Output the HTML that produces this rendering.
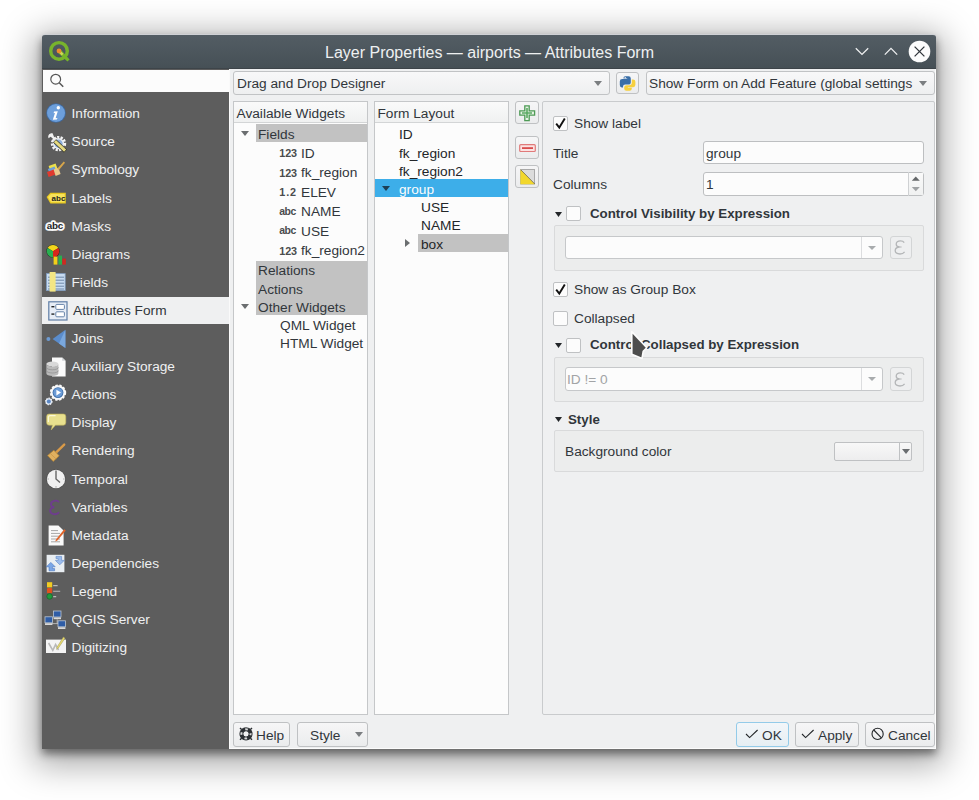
<!DOCTYPE html>
<html><head><meta charset="utf-8">
<style>
*{box-sizing:border-box;margin:0;padding:0}
html,body{width:979px;height:800px;overflow:hidden;background:#fff;font-family:"Liberation Sans",sans-serif;font-size:13.7px;color:#232629}
.a{position:absolute}
.t{position:absolute;white-space:nowrap;line-height:16px}
svg{position:absolute;overflow:visible}
</style></head><body>
<div class="a" style="left:42px;top:34px;width:894px;height:715px;background:#fcfcfc;box-shadow:0 5px 8px rgba(0,0,0,0.45), 0 8px 34px 8px rgba(0,0,0,0.34);border-radius:4px 4px 0 0"></div>
<div class="a" style="left:230px;top:69px;width:705px;height:679px;background:#eff0f1"></div>
<div class="a" style="left:42px;top:34px;width:894px;height:35px;background:linear-gradient(#535d64,#465056);border-radius:3px 3px 0 0;border-top:1px solid #cfd1d5;border-bottom:1px solid #3d4449"></div>
<div class="t" style="left:325px;top:44.61px;font-size:16px;color:#eef0f1;font-weight:normal;">Layer Properties — airports — Attributes Form</div>
<div class="a" style="left:42px;top:69px;width:187px;height:680px;background:#5d5d5d"></div>
<div class="a" style="left:43px;top:70px;width:186px;height:22px;background:#fcfcfc"></div>
<div class="a" style="left:229px;top:69px;width:1px;height:680px;background:#fafafa"></div>
<div class="t" style="left:71.5px;top:106.17px;font-size:13.7px;color:#eff0f1;font-weight:normal;">Information</div>
<div class="t" style="left:71.5px;top:134.28px;font-size:13.7px;color:#eff0f1;font-weight:normal;">Source</div>
<div class="t" style="left:71.5px;top:162.39px;font-size:13.7px;color:#eff0f1;font-weight:normal;">Symbology</div>
<div class="t" style="left:71.5px;top:190.50px;font-size:13.7px;color:#eff0f1;font-weight:normal;">Labels</div>
<div class="t" style="left:71.5px;top:218.61px;font-size:13.7px;color:#eff0f1;font-weight:normal;">Masks</div>
<div class="t" style="left:71.5px;top:246.72px;font-size:13.7px;color:#eff0f1;font-weight:normal;">Diagrams</div>
<div class="t" style="left:71.5px;top:274.83px;font-size:13.7px;color:#eff0f1;font-weight:normal;">Fields</div>
<div class="a" style="left:42px;top:297px;width:187px;height:27px;background:#eff0f1"></div>
<div class="t" style="left:73px;top:302.94px;font-size:13.7px;color:#31363b;font-weight:normal;">Attributes Form</div>
<div class="t" style="left:71.5px;top:331.05px;font-size:13.7px;color:#eff0f1;font-weight:normal;">Joins</div>
<div class="t" style="left:71.5px;top:359.16px;font-size:13.7px;color:#eff0f1;font-weight:normal;">Auxiliary Storage</div>
<div class="t" style="left:71.5px;top:387.27px;font-size:13.7px;color:#eff0f1;font-weight:normal;">Actions</div>
<div class="t" style="left:71.5px;top:415.38px;font-size:13.7px;color:#eff0f1;font-weight:normal;">Display</div>
<div class="t" style="left:71.5px;top:443.49px;font-size:13.7px;color:#eff0f1;font-weight:normal;">Rendering</div>
<div class="t" style="left:71.5px;top:471.60px;font-size:13.7px;color:#eff0f1;font-weight:normal;">Temporal</div>
<div class="t" style="left:71.5px;top:499.71px;font-size:13.7px;color:#eff0f1;font-weight:normal;">Variables</div>
<div class="t" style="left:71.5px;top:527.82px;font-size:13.7px;color:#eff0f1;font-weight:normal;">Metadata</div>
<div class="t" style="left:71.5px;top:555.93px;font-size:13.7px;color:#eff0f1;font-weight:normal;">Dependencies</div>
<div class="t" style="left:71.5px;top:584.04px;font-size:13.7px;color:#eff0f1;font-weight:normal;">Legend</div>
<div class="t" style="left:71.5px;top:612.15px;font-size:13.7px;color:#eff0f1;font-weight:normal;">QGIS Server</div>
<div class="t" style="left:71.5px;top:640.26px;font-size:13.7px;color:#eff0f1;font-weight:normal;">Digitizing</div>
<svg style="left:46px;top:103.4px" width="21" height="21" viewBox="0 0 21 21"><circle cx="10" cy="10" r="9.8" fill="#3f6a9f"/><circle cx="10" cy="10" r="9" fill="#6d9fdb"/><circle cx="12.3" cy="4.8" r="1.7" fill="#fff"/><path d="M8 8.6L11.8 8.2L9.6 15.2L11.5 15L10.8 16.6L6.8 16.8L9 10L7.6 10.2Z" fill="#fff"/></svg>
<svg style="left:46px;top:131.6px" width="21" height="21" viewBox="0 0 21 21"><circle cx="12.5" cy="11.6" r="6.4" fill="none" stroke="#f4f4f4" stroke-width="2.6" stroke-dasharray="2.2 1.3"/><circle cx="12.5" cy="11.6" r="5.6" fill="#f0f2f5"/><circle cx="12.5" cy="11.6" r="4.2" fill="#8fb0dc"/><path d="M6.6 1.2C3.6 0.8 1.4 3.2 2.6 6.2L4.6 4.8L6.8 6.4L6.2 8.6C8.2 9.4 10.4 7.6 9.8 5.2L11.2 6.6L9.4 8.4Z" fill="#f2f2f2"/><path d="M8.6 8.8L19.4 19" stroke="#2e2e22" stroke-width="4.4"/><path d="M8.9 9.1L19.1 18.7" stroke="#e6da80" stroke-width="3"/></svg>
<svg style="left:46px;top:159.7px" width="21" height="21" viewBox="0 0 21 21"><path d="M2.6 6L9.6 3.4L12 10L5 12.6Z" fill="#ece04a"/><path d="M1.9 9L8.6 6.6L9.6 9.4L2.9 11.8Z" fill="#6fa0d6"/><path d="M1 12L7.8 9.6L9.6 14.6L2.6 17Z" fill="#e03a2e"/><path d="M7.6 9.6L12.4 7.8L14.6 14L9.6 16Z" fill="#e9c88b"/><path d="M11.4 8.6L17.8 1.6L19 2.8L13 10Z" fill="#d8a64a"/></svg>
<svg style="left:46px;top:190.6px" width="21" height="21" viewBox="0 0 21 21"><path d="M0.6 6L4.4 1.8H19.8V12.4H4.4Z" fill="#e8c81e"/><path d="M2 6L5 3H18.6V11.2H5Z" fill="#f6e25a"/><text x="5.6" y="10.4" font-family="Liberation Sans" font-weight="bold" font-size="8" fill="#1e1e1e">abc</text></svg>
<svg style="left:45.2px;top:219.2px" width="21" height="21" viewBox="0 0 21 21"><text x="1.8" y="9.8" font-family="Liberation Sans" font-weight="bold" font-size="9.8" fill="#232629" stroke="#fafafa" stroke-width="3.6" stroke-linejoin="round" paint-order="stroke" letter-spacing="-0.3">abc</text></svg>
<svg style="left:46px;top:243.8px" width="21" height="21" viewBox="0 0 21 21"><circle cx="7" cy="7.2" r="6.6" fill="#1f2a1a"/><path d="M7 7.2L1.6 4.1A6.2 6.2 0 0 1 12.4 4.1Z" fill="#f4d61c"/><path d="M7 7.2L12.4 4.1A6.2 6.2 0 0 1 7 13.4Z" fill="#d8261c"/><path d="M7 7.2L7 13.4A6.2 6.2 0 0 1 1.6 4.1Z" fill="#29b050"/><rect x="7.6" y="12.6" width="3.8" height="8" fill="#f2cf18"/><rect x="12.4" y="11.6" width="3.6" height="9" fill="#2aae4e"/><rect x="16.3" y="14.6" width="3.6" height="6" fill="#d02a20"/></svg>
<svg style="left:46px;top:271px" width="21" height="21" viewBox="0 0 21 21"><rect x="0.4" y="2.6" width="18.8" height="17" fill="#c8dcf2" stroke="#7f9bbd" stroke-width="0.8"/><path d="M2 6.2H18M2 9.2H18M2 12.2H18M2 15.2H18M2 18H18" stroke="#6e88a8" stroke-width="1"/><rect x="3.6" y="1" width="6" height="19.6" fill="#f3e684"/></svg>
<svg style="left:48.3px;top:300.8px" width="21" height="21" viewBox="0 0 21 21"><rect x="0.8" y="0.8" width="18.2" height="18.2" fill="#e7edf6" stroke="#5f7ea6" stroke-width="1.2"/><rect x="3.4" y="5" width="3" height="1.4" fill="#232629"/><rect x="3.4" y="12.4" width="3" height="1.4" fill="#232629"/><rect x="7.8" y="3.4" width="8.6" height="5" rx="1" fill="#fff" stroke="#6582a8" stroke-width="1"/><rect x="7.8" y="10.8" width="8.6" height="5" rx="1" fill="#fff" stroke="#6582a8" stroke-width="1"/></svg>
<svg style="left:46.4px;top:329.4px" width="21" height="21" viewBox="0 0 21 21"><circle cx="2.4" cy="10" r="2" fill="#6d9ad0"/><path d="M19.4 0.8V19L6.6 10Z" fill="#5a8ccc"/><path d="M19.4 0.8V19L13 14.6Z" fill="#7aa8de"/></svg>
<svg style="left:46px;top:356.6px" width="21" height="21" viewBox="0 0 21 21"><path d="M6 0.4H16.2L19.6 3.8V19.4H6Z" fill="#fafafa"/><path d="M16.2 0.4V3.8H19.6Z" fill="#cfd2d4"/><ellipse cx="6.4" cy="7" rx="6" ry="2.4" fill="#d9d9d9"/><path d="M0.4 7V16.6A6 2.4 0 0 0 12.4 16.6V7A6 2.4 0 0 1 0.4 7Z" fill="#b9b9b9"/><path d="M0.4 10.4A6 2.4 0 0 0 12.4 10.4M0.4 13.6A6 2.4 0 0 0 12.4 13.6" stroke="#8e8e8e" stroke-width="0.7" fill="none"/></svg>
<svg style="left:46px;top:384.6px" width="21" height="21" viewBox="0 0 21 21"><circle cx="12" cy="7.6" r="7.4" fill="#fafafa" stroke="#fafafa" stroke-width="1.6" stroke-dasharray="2.4 1.6"/><circle cx="12" cy="7.6" r="5.4" fill="#3e6ea8"/><circle cx="12" cy="7.6" r="4.6" fill="#6b9bd6"/><path d="M10.4 4.8V10.4L15 7.6Z" fill="#fff"/><circle cx="2.8" cy="16.4" r="3.2" fill="#dfe8f4" stroke="#eef2f8" stroke-width="1.2" stroke-dasharray="1.4 1"/><circle cx="2.8" cy="16.4" r="2" fill="#5b87c4"/></svg>
<svg style="left:46px;top:413px" width="21" height="21" viewBox="0 0 21 21"><path d="M3 1H17.4A2.4 2.4 0 0 1 19.8 3.4V9.8A2.4 2.4 0 0 1 17.4 12.2H9.4L5.2 17L6.4 12.2H3A2.4 2.4 0 0 1 0.6 9.8V3.4A2.4 2.4 0 0 1 3 1Z" fill="#e8e08e" stroke="#bfb25a" stroke-width="0.6"/><path d="M2.4 9V4A1.8 1.8 0 0 1 4.2 2.6H9.6" stroke="#fbf8d6" stroke-width="1.2" fill="none"/></svg>
<svg style="left:46px;top:442px" width="21" height="21" viewBox="0 0 21 21"><path d="M10 10.6L18.2 2.6" stroke="#d99a48" stroke-width="2.4" stroke-linecap="round"/><path d="M1.6 13.6L7.8 8.2L13.2 13.8L7.2 19.4Z" fill="#e0b060" stroke="#b8842e" stroke-width="0.7"/><path d="M4.2 11.4L10.2 17" stroke="#c89440" stroke-width="0.7"/></svg>
<svg style="left:45.8px;top:469.2px" width="21" height="21" viewBox="0 0 21 21"><circle cx="10" cy="10" r="9.8" fill="#4a4a4a"/><circle cx="10" cy="10" r="9.2" fill="#f0f0f0"/><path d="M10 1.6V10L14 13.6" stroke="#666" stroke-width="1.4" fill="none"/><g fill="#888"><rect x="9.6" y="17.2" width="0.8" height="1.4"/><rect x="1.4" y="9.6" width="1.4" height="0.8"/><rect x="17.2" y="9.6" width="1.4" height="0.8"/></g></svg>
<svg style="left:46px;top:498.6px" width="21" height="21" viewBox="0 0 21 21"><path d="M12.4 2.6C10.6 0.8 5 1.6 5 5.2C5 7 6.6 8 8.2 8.2C5.8 8.4 3.8 9.8 4.2 12.2C4.8 15.8 10.4 16 12.4 13.8" stroke="#6e3d8e" stroke-width="1.9" fill="none" stroke-linecap="round"/></svg>
<svg style="left:46.4px;top:524.8px" width="21" height="21" viewBox="0 0 21 21"><path d="M2.6 0.6H12.4L17.6 5.4V20.4H2.6Z" fill="#fafafa"/><path d="M5 5.6H12M5 8.4H14M5 11.2H14M5 14H14M5 16.8H14" stroke="#a6a6a6" stroke-width="1"/><path d="M10 14.6L18.2 4.2L19.8 5.6L11.4 15.6L9.2 16.6Z" fill="#e0642a"/></svg>
<svg style="left:46.2px;top:553.6px" width="21" height="21" viewBox="0 0 21 21"><path d="M0.6 0.8H18.4V18.2H0.6Z" fill="#e9eef2"/><path d="M10 2.4H15.6V6.4H18.2L13.8 10.8L9.4 6.4H12.2V4.6H10Z" fill="#9bbcec" stroke="#5c86c8" stroke-width="0.6"/><path d="M8.6 16.8H3V12.8H0.4L4.8 8.4L9.2 12.8H6.4V14.6H8.6Z" fill="#7aa6e6" stroke="#4a76be" stroke-width="0.6"/></svg>
<svg style="left:46px;top:581.4px" width="21" height="21" viewBox="0 0 21 21"><rect x="1" y="1.2" width="5.2" height="5.2" fill="#f2cc22"/><rect x="1" y="7" width="5.2" height="5.2" fill="#e2521e" rx="1"/><circle cx="3.6" cy="15.4" r="2.8" fill="#1f9a3c" stroke="#135a24" stroke-width="0.6"/><path d="M7.2 4.6H11.6M7.2 10.2H14.2M7.2 15.6H10.2" stroke="#b8b8b8" stroke-width="1.1"/></svg>
<svg style="left:45.4px;top:610.4px" width="21" height="21" viewBox="0 0 21 21"><path d="M12.2 9.4V13.6M6.6 13.6H14" stroke="#c8c8c8" stroke-width="0.8"/><g><rect x="8.4" y="1" width="7.6" height="6" fill="#2f5da6" stroke="#bac6d4" stroke-width="0.8"/><rect x="8.6" y="7.4" width="7.4" height="1.8" fill="#d8d8d8"/></g><g><rect x="0" y="6.8" width="7.4" height="6" fill="#2f5da6" stroke="#bac6d4" stroke-width="0.8"/><rect x="0" y="13.2" width="7.4" height="1.8" fill="#d8d8d8"/></g><g><rect x="13" y="10.8" width="7.4" height="6" fill="#2f5da6" stroke="#bac6d4" stroke-width="0.8"/><rect x="13" y="17.2" width="7.4" height="1.8" fill="#d8d8d8"/></g></svg>
<svg style="left:46px;top:635.2px" width="21" height="21" viewBox="0 0 21 21"><rect x="0" y="4.6" width="20" height="13.4" fill="#f4f4f4"/><path d="M2.6 8L6.8 15.4L9.6 9.6L12.6 15" stroke="#b9b9b9" stroke-width="1.6" fill="none"/><path d="M17.4 2L19 3.2L12.4 13L10.6 14.4L11 12.2Z" fill="#e9dc6a" stroke="#9b9460" stroke-width="0.5"/></svg>
<svg style="left:48px;top:40px" width="24" height="24" viewBox="0 0 24 24"><circle cx="11" cy="10.9" r="8.3" fill="none" stroke="#78b42c" stroke-width="3.4"/><path d="M9.6 12.6L12.6 9.6L21.6 19.4L19.4 21.6Z" fill="#76b52a"/><path d="M11.2 11.2L14.6 14.6" stroke="#d6d45a" stroke-width="2.2"/><circle cx="11" cy="10.9" r="2.4" fill="#ee8a2e"/></svg>
<svg style="left:855px;top:47px" width="14" height="9" viewBox="0 0 14 9"><path d="M0.8 1.2L7 7.4L13.2 1.2" stroke="#eff0f1" stroke-width="1.3" fill="none"/></svg>
<svg style="left:884px;top:47px" width="14" height="9" viewBox="0 0 14 9"><path d="M0.8 7.6L7 1.4L13.2 7.6" stroke="#eff0f1" stroke-width="1.3" fill="none"/></svg>
<svg style="left:908px;top:40px" width="23" height="23" viewBox="0 0 23 23"><circle cx="11.5" cy="11.5" r="10.8" fill="#fcfcfc"/><path d="M6.6 6.6L16.4 16.4M16.4 6.6L6.6 16.4" stroke="#31363b" stroke-width="1.3"/></svg>
<div class="a" style="left:233px;top:71px;width:377px;height:24px;background:linear-gradient(#f8f8f9,#eeeff0);border:1px solid #c1c3c5;border-radius:3px"></div>
<div class="t" style="left:237px;top:76.47px;font-size:13.7px;color:#31363b;font-weight:normal;">Drag and Drop Designer</div>
<svg style="left:594.2px;top:80.5px" width="8" height="5"><path d="M0 0H8L4.0 5Z" fill="#7b7e81"/></svg>
<div class="a" style="left:616px;top:72px;width:23px;height:22px;background:linear-gradient(#f6f6f7,#ebeced);border:1px solid #bfc1c3;border-radius:3px"></div>
<div class="a" style="left:646px;top:71px;width:289px;height:24px;background:linear-gradient(#f8f8f9,#eeeff0);border:1px solid #c1c3c5;border-radius:3px"></div>
<div class="t" style="left:649px;top:76.47px;font-size:13.7px;color:#31363b;font-weight:normal;">Show Form on Add Feature (global settings</div>
<svg style="left:919.0px;top:80.5px" width="8" height="5"><path d="M0 0H8L4.0 5Z" fill="#7b7e81"/></svg>
<div class="a" style="left:233px;top:101px;width:135px;height:614px;background:#fcfcfc;border:1px solid #c5c7c9"></div>
<div class="a" style="left:234px;top:102px;width:133px;height:21px;background:linear-gradient(#fafafa,#f0f1f1);border-bottom:1px solid #d3d5d6"></div>
<div class="t" style="left:236.5px;top:106.47px;font-size:13.7px;color:#31363b;font-weight:normal;">Available Widgets</div>
<div class="a" style="left:256px;top:124px;width:111px;height:18px;background:#c2c2c2"></div>
<svg style="left:241.0px;top:131.0px" width="8" height="5"><path d="M0 0H8L4.0 5Z" fill="#6b6e70"/></svg>
<div class="t" style="left:258px;top:126.97px;font-size:13.7px;color:#31363b;font-weight:normal;">Fields</div>
<div class="t" style="left:279.3px;top:145.03px;font-size:10.8px;color:#4a4c4e;font-weight:bold;letter-spacing:-0.1px">123</div>
<div class="t" style="left:301px;top:145.87px;font-size:13.7px;color:#31363b;font-weight:normal;">ID</div>
<div class="t" style="left:279.3px;top:164.53px;font-size:10.8px;color:#4a4c4e;font-weight:bold;letter-spacing:-0.1px">123</div>
<div class="t" style="left:301px;top:165.37px;font-size:13.7px;color:#31363b;font-weight:normal;">fk_region</div>
<div class="t" style="left:279.3px;top:184.03px;font-size:10.8px;color:#4a4c4e;font-weight:bold;letter-spacing:0.9px">1.2</div>
<div class="t" style="left:301px;top:184.87px;font-size:13.7px;color:#31363b;font-weight:normal;">ELEV</div>
<div class="t" style="left:279.3px;top:203.66px;font-size:10.4px;color:#4a4c4e;font-weight:bold;letter-spacing:-0.5px">abc</div>
<div class="t" style="left:301px;top:204.37px;font-size:13.7px;color:#31363b;font-weight:normal;">NAME</div>
<div class="t" style="left:279.3px;top:223.16px;font-size:10.4px;color:#4a4c4e;font-weight:bold;letter-spacing:-0.5px">abc</div>
<div class="t" style="left:301px;top:223.87px;font-size:13.7px;color:#31363b;font-weight:normal;">USE</div>
<div class="t" style="left:279.3px;top:242.53px;font-size:10.8px;color:#4a4c4e;font-weight:bold;letter-spacing:-0.1px">123</div>
<div class="t" style="left:301px;top:243.37px;font-size:13.7px;color:#31363b;font-weight:normal;">fk_region2</div>
<div class="a" style="left:256px;top:261px;width:111px;height:54px;background:#c2c2c2"></div>
<div class="t" style="left:258px;top:263.47px;font-size:13.7px;color:#31363b;font-weight:normal;">Relations</div>
<div class="t" style="left:258px;top:281.57px;font-size:13.7px;color:#31363b;font-weight:normal;">Actions</div>
<div class="t" style="left:258px;top:299.67px;font-size:13.7px;color:#31363b;font-weight:normal;">Other Widgets</div>
<svg style="left:241.0px;top:304.0px" width="8" height="5"><path d="M0 0H8L4.0 5Z" fill="#6b6e70"/></svg>
<div class="t" style="left:280px;top:318.17px;font-size:13.7px;color:#31363b;font-weight:normal;">QML Widget</div>
<div class="t" style="left:280px;top:336.27px;font-size:13.7px;color:#31363b;font-weight:normal;">HTML Widget</div>
<div class="a" style="left:374px;top:101px;width:135px;height:614px;background:#fcfcfc;border:1px solid #c5c7c9"></div>
<div class="a" style="left:375px;top:102px;width:133px;height:21px;background:linear-gradient(#fafafa,#f0f1f1);border-bottom:1px solid #d3d5d6"></div>
<div class="t" style="left:377.5px;top:106.47px;font-size:13.7px;color:#31363b;font-weight:normal;">Form Layout</div>
<div class="a" style="left:375px;top:179px;width:133px;height:18px;background:#3daee9"></div>
<svg style="left:382.0px;top:186.0px" width="8" height="5"><path d="M0 0H8L4.0 5Z" fill="#1d3f55"/></svg>
<div class="a" style="left:418px;top:234px;width:90px;height:18px;background:#c2c2c2"></div>
<svg style="left:405.0px;top:239.3px" width="5" height="8"><path d="M0 0V8L5 4.0Z" fill="#6b6e70"/></svg>
<div class="t" style="left:399px;top:127.47px;font-size:13.7px;color:#232629;font-weight:normal;">ID</div>
<div class="t" style="left:399px;top:145.67px;font-size:13.7px;color:#232629;font-weight:normal;">fk_region</div>
<div class="t" style="left:399px;top:163.87px;font-size:13.7px;color:#232629;font-weight:normal;">fk_region2</div>
<div class="t" style="left:399px;top:182.07px;font-size:13.7px;color:#fcfcfc;font-weight:normal;">group</div>
<div class="t" style="left:421px;top:200.27px;font-size:13.7px;color:#232629;font-weight:normal;">USE</div>
<div class="t" style="left:421px;top:218.47px;font-size:13.7px;color:#232629;font-weight:normal;">NAME</div>
<div class="t" style="left:421px;top:236.67px;font-size:13.7px;color:#232629;font-weight:normal;">box</div>
<div class="a" style="left:515px;top:101px;width:24px;height:23px;background:linear-gradient(#f6f6f7,#ebeced);border:1px solid #bfc1c3;border-radius:3px"></div>
<div class="a" style="left:515px;top:136px;width:24px;height:23px;background:linear-gradient(#f6f6f7,#ebeced);border:1px solid #bfc1c3;border-radius:3px"></div>
<div class="a" style="left:515px;top:165px;width:24px;height:23px;background:linear-gradient(#f6f6f7,#ebeced);border:1px solid #bfc1c3;border-radius:3px"></div>
<div class="a" style="left:542px;top:101px;width:393px;height:614px;background:#eff0f1;border:1px solid #c9cbcd;border-radius:2px"></div>
<div class="a" style="left:553px;top:116px;width:15px;height:15px;background:#fcfcfc;border:1px solid #bfc1c3;border-radius:2px"></div>
<svg style="left:553px;top:116px" width="15" height="15"><path d="M3.2 7.6L6.3 11.6L11.8 2.6" fill="none" stroke="#111" stroke-width="1.9" stroke-linejoin="miter"/></svg>
<div class="t" style="left:574px;top:116.47px;font-size:13.7px;color:#31363b;font-weight:normal;">Show label</div>
<div class="t" style="left:553px;top:145.97px;font-size:13.7px;color:#31363b;font-weight:normal;">Title</div>
<div class="a" style="left:703px;top:141px;width:221px;height:23px;background:#fcfcfc;border:1px solid #bdbfc1;border-radius:3px"></div>
<div class="t" style="left:706px;top:145.97px;font-size:13.7px;color:#31363b;font-weight:normal;">group</div>
<div class="t" style="left:553px;top:177.47px;font-size:13.7px;color:#31363b;font-weight:normal;">Columns</div>
<div class="a" style="left:703px;top:172px;width:221px;height:24px;background:#fcfcfc;border:1px solid #bdbfc1;border-radius:3px"></div>
<div class="t" style="left:706px;top:177.47px;font-size:13.7px;color:#31363b;font-weight:normal;">1</div>
<div class="a" style="left:908px;top:172px;width:1px;height:24px;background:#cfd1d3"></div>
<div class="a" style="left:909px;top:173px;width:14px;height:22px;background:linear-gradient(#fafafa,#f0f1f1)"></div>
<svg style="left:911px;top:176px" width="10" height="16" viewBox="0 0 10 16"><path d="M0.8 4.8L4.8 0.6L8.8 4.8Z" fill="#646769"/><path d="M0.8 11L4.8 15.2L8.8 11Z" fill="#9fa2a4"/></svg>
<svg style="left:554.5px;top:211.5px" width="7" height="5"><path d="M0 0H7L3.5 5Z" fill="#232629"/></svg>
<div class="a" style="left:566px;top:206px;width:15px;height:15px;background:#fcfcfc;border:1px solid #bfc1c3;border-radius:2px"></div>
<div class="t" style="left:590px;top:205.90px;font-size:13.3px;color:#31363b;font-weight:bold;">Control Visibility by Expression</div>
<div class="a" style="left:554px;top:225px;width:370px;height:46px;background:#eceded;border:1px solid #d9dadb;border-radius:2px"></div>
<div class="a" style="left:565px;top:236px;width:318px;height:23px;background:#fcfcfc;border:1px solid #c6c8ca;border-radius:3px"></div>
<div class="a" style="left:861px;top:237px;width:1px;height:21px;background:#dcdddf"></div>
<svg style="left:867.5px;top:245.5px" width="8" height="4"><path d="M0 0H8L4.0 4Z" fill="#a8abad"/></svg>
<div class="a" style="left:890px;top:236px;width:22px;height:23px;background:#eeeff0;border:1px solid #d3d5d6;border-radius:3px"></div>
<svg style="left:894px;top:240px" width="12" height="15" viewBox="0 0 12 15"><path d="M10.2 2.6C9.4 1.2 7.8 0.8 6.4 0.8C3.8 0.8 2.2 2.4 2.2 4.2C2.2 5.8 3.6 6.8 5.6 7C3 7.2 1.2 8.6 1.2 10.6C1.2 12.8 3.4 14 6 14C8 14 9.6 13.2 10.6 11.8" fill="none" stroke="#b4b6b8" stroke-width="1.3"/><path d="M5.4 7H7.6" stroke="#b4b6b8" stroke-width="1"/></svg>
<div class="a" style="left:553px;top:282px;width:15px;height:15px;background:#fcfcfc;border:1px solid #bfc1c3;border-radius:2px"></div>
<svg style="left:553px;top:282px" width="15" height="15"><path d="M3.2 7.6L6.3 11.6L11.8 2.6" fill="none" stroke="#111" stroke-width="1.9" stroke-linejoin="miter"/></svg>
<div class="t" style="left:574px;top:282.47px;font-size:13.7px;color:#31363b;font-weight:normal;">Show as Group Box</div>
<div class="a" style="left:553px;top:311px;width:15px;height:15px;background:#fcfcfc;border:1px solid #bfc1c3;border-radius:2px"></div>
<div class="t" style="left:574px;top:311.47px;font-size:13.7px;color:#31363b;font-weight:normal;">Collapsed</div>
<svg style="left:554.5px;top:343.0px" width="7" height="5"><path d="M0 0H7L3.5 5Z" fill="#232629"/></svg>
<div class="a" style="left:566px;top:338px;width:15px;height:15px;background:#fcfcfc;border:1px solid #bfc1c3;border-radius:2px"></div>
<div class="t" style="left:590px;top:337.20px;font-size:13.3px;color:#31363b;font-weight:bold;">Control Collapsed by Expression</div>
<div class="a" style="left:554px;top:357px;width:370px;height:45px;background:#eceded;border:1px solid #d9dadb;border-radius:2px"></div>
<div class="a" style="left:565px;top:367px;width:318px;height:24px;background:#fcfcfc;border:1px solid #c6c8ca;border-radius:3px"></div>
<div class="a" style="left:861px;top:368px;width:1px;height:22px;background:#dcdddf"></div>
<div class="t" style="left:567px;top:372.47px;font-size:13.7px;color:#a2a4a6;font-weight:normal;">ID != 0</div>
<svg style="left:867.5px;top:377.0px" width="8" height="4"><path d="M0 0H8L4.0 4Z" fill="#a8abad"/></svg>
<div class="a" style="left:890px;top:367px;width:22px;height:24px;background:#eeeff0;border:1px solid #d3d5d6;border-radius:3px"></div>
<svg style="left:894px;top:371.5px" width="12" height="15" viewBox="0 0 12 15"><path d="M10.2 2.6C9.4 1.2 7.8 0.8 6.4 0.8C3.8 0.8 2.2 2.4 2.2 4.2C2.2 5.8 3.6 6.8 5.6 7C3 7.2 1.2 8.6 1.2 10.6C1.2 12.8 3.4 14 6 14C8 14 9.6 13.2 10.6 11.8" fill="none" stroke="#b4b6b8" stroke-width="1.3"/><path d="M5.4 7H7.6" stroke="#b4b6b8" stroke-width="1"/></svg>
<svg style="left:554.5px;top:417.0px" width="7" height="5"><path d="M0 0H7L3.5 5Z" fill="#232629"/></svg>
<div class="t" style="left:568px;top:411.60px;font-size:13.3px;color:#31363b;font-weight:bold;">Style</div>
<div class="a" style="left:554px;top:430px;width:370px;height:42px;background:#eceded;border:1px solid #d9dadb;border-radius:2px"></div>
<div class="t" style="left:565px;top:444.47px;font-size:13.7px;color:#31363b;font-weight:normal;">Background color</div>
<div class="a" style="left:834px;top:442px;width:78px;height:19px;background:linear-gradient(#f8f8f8,#ededee);border:1px solid #bfc1c3;border-radius:2px"></div>
<div class="a" style="left:899px;top:442px;width:1px;height:19px;background:#bfc1c3"></div>
<svg style="left:901.5px;top:448.5px" width="8" height="5"><path d="M0 0H8L4.0 5Z" fill="#6a6d70"/></svg>
<div class="a" style="left:233px;top:722px;width:57px;height:25px;background:linear-gradient(#f6f6f7,#ebeced);border:1px solid #bfc1c3;border-radius:3px"></div>
<div class="t" style="left:256px;top:728.47px;font-size:13.7px;color:#31363b;font-weight:normal;">Help</div>
<div class="a" style="left:297px;top:722px;width:71px;height:25px;background:linear-gradient(#f6f6f7,#ebeced);border:1px solid #bfc1c3;border-radius:3px"></div>
<div class="t" style="left:310px;top:728.47px;font-size:13.7px;color:#31363b;font-weight:normal;">Style</div>
<svg style="left:354.5px;top:731.5px" width="8" height="5"><path d="M0 0H8L4.0 5Z" fill="#7b7e81"/></svg>
<div class="a" style="left:736px;top:722px;width:53px;height:25px;background:linear-gradient(#f2f6f9,#e6eef3);border:1px solid #93cbe9;border-radius:3px"></div>
<div class="t" style="left:762px;top:728.47px;font-size:13.7px;color:#31363b;font-weight:normal;">OK</div>
<div class="a" style="left:795px;top:722px;width:64px;height:25px;background:linear-gradient(#f6f6f7,#ebeced);border:1px solid #bfc1c3;border-radius:3px"></div>
<div class="t" style="left:818px;top:728.47px;font-size:13.7px;color:#31363b;font-weight:normal;">Apply</div>
<div class="a" style="left:865px;top:722px;width:70px;height:25px;background:linear-gradient(#f6f6f7,#ebeced);border:1px solid #bfc1c3;border-radius:3px"></div>
<div class="t" style="left:888px;top:728.47px;font-size:13.7px;color:#31363b;font-weight:normal;">Cancel</div>
<svg style="left:48px;top:72px" width="18" height="18" viewBox="0 0 18 18"><circle cx="7.7" cy="7.2" r="4.9" fill="none" stroke="#555" stroke-width="1.2"/><path d="M11.2 10.7L15.2 14.7" stroke="#555" stroke-width="1.5"/></svg>
<svg style="left:619px;top:75px" width="18" height="17" viewBox="0 0 18 17"><path d="M6.4 1.2H9.6A2.2 2.2 0 0 1 11.8 3.4V7.4A2.2 2.2 0 0 1 9.6 9.6H6.2A2.2 2.2 0 0 0 4 11.8V12.4H2.8A2.4 2.4 0 0 1 0.8 10V6.4A2.4 2.4 0 0 1 3.2 4H8.2V3.4H4.4V3.2A2 2 0 0 1 6.4 1.2Z" fill="#3a6fa8"/><circle cx="6.2" cy="2.8" r="0.7" fill="#fff"/><path d="M7.4 15.8H10.6A2.2 2.2 0 0 0 12.8 13.6V12.8H8.8V12.2H13.8A2.4 2.4 0 0 0 16.4 9.8V6.8A2.4 2.4 0 0 0 14 4.4H12.8V7.6A2.6 2.6 0 0 1 10.2 10.2H7.4A2.2 2.2 0 0 0 5.2 12.4V13.6A2.2 2.2 0 0 0 7.4 15.8Z" fill="#f6d03e"/></svg>
<svg style="left:519px;top:105px" width="17" height="17" viewBox="0 0 17 17"><path d="M5.8 0.8H10.2V5.8H15.6V10.2H10.2V15.6H5.8V10.2H0.8V5.8H5.8Z" fill="#e6f2e4" stroke="#4e9a56" stroke-width="1.3"/><path d="M7.2 3H8.8V7.2H13V8.8H8.8V13H7.2V8.8H3V7.2H7.2Z" fill="#5aa962"/></svg>
<svg style="left:519px;top:144px" width="17" height="9" viewBox="0 0 17 9"><rect x="0.7" y="0.7" width="15.6" height="6.8" rx="1" fill="#fbe2e2" stroke="#e07a7a" stroke-width="1.2"/><rect x="3" y="3.2" width="11" height="1.8" fill="#d84c4c"/></svg>
<svg style="left:520px;top:169px" width="16" height="16" viewBox="0 0 16 16"><rect x="0.6" y="0.6" width="14" height="14.4" fill="#dcdcdc" stroke="#9a9a9a" stroke-width="0.8"/><path d="M0.4 0.6L14.8 15.2H0.4Z" fill="#f2d72c"/><path d="M0.8 0.8L14.8 15" stroke="#5e5a3a" stroke-width="0.7"/></svg>
<svg style="left:239px;top:727px" width="15" height="14" viewBox="0 0 15 14"><circle cx="7" cy="6.9" r="4.7" fill="none" stroke="#d9dadb" stroke-width="3"/><circle cx="7" cy="6.9" r="6.1" fill="none" stroke="#2a2e32" stroke-width="1"/><circle cx="7" cy="6.9" r="3.2" fill="none" stroke="#2a2e32" stroke-width="1"/><circle cx="7" cy="6.9" r="4.7" fill="none" stroke="#2a2e32" stroke-width="3.2" stroke-dasharray="4.6 2.78" stroke-dashoffset="-1.39"/><path d="M1 1L2.6 2.6M13 1L11.4 2.6M1 12.8L2.6 11.2M13 12.8L11.4 11.2" stroke="#2a2e32" stroke-width="1.4"/></svg>
<svg style="left:745px;top:729px" width="14" height="10" viewBox="0 0 14 10"><path d="M1 5L4.6 8.6L12.6 1" fill="none" stroke="#232629" stroke-width="1.1"/></svg>
<svg style="left:801px;top:729px" width="14" height="10" viewBox="0 0 14 10"><path d="M1 5L4.6 8.6L12.6 1" fill="none" stroke="#232629" stroke-width="1.1"/></svg>
<svg style="left:871px;top:727px" width="14" height="14" viewBox="0 0 14 14"><circle cx="6.6" cy="6.9" r="5.6" fill="none" stroke="#232629" stroke-width="1.1"/><path d="M2.8 3L10.4 10.8" stroke="#232629" stroke-width="1.1"/></svg>
<svg style="left:629px;top:330px" width="20" height="30" viewBox="0 0 20 30"><path d="M2.8 1.6V24.2L13 28.4L14.2 21.4L17.8 17.8Z" fill="#4d4d4d" stroke="#fcfcfc" stroke-width="1.6" stroke-linejoin="round"/></svg>
</body></html>
